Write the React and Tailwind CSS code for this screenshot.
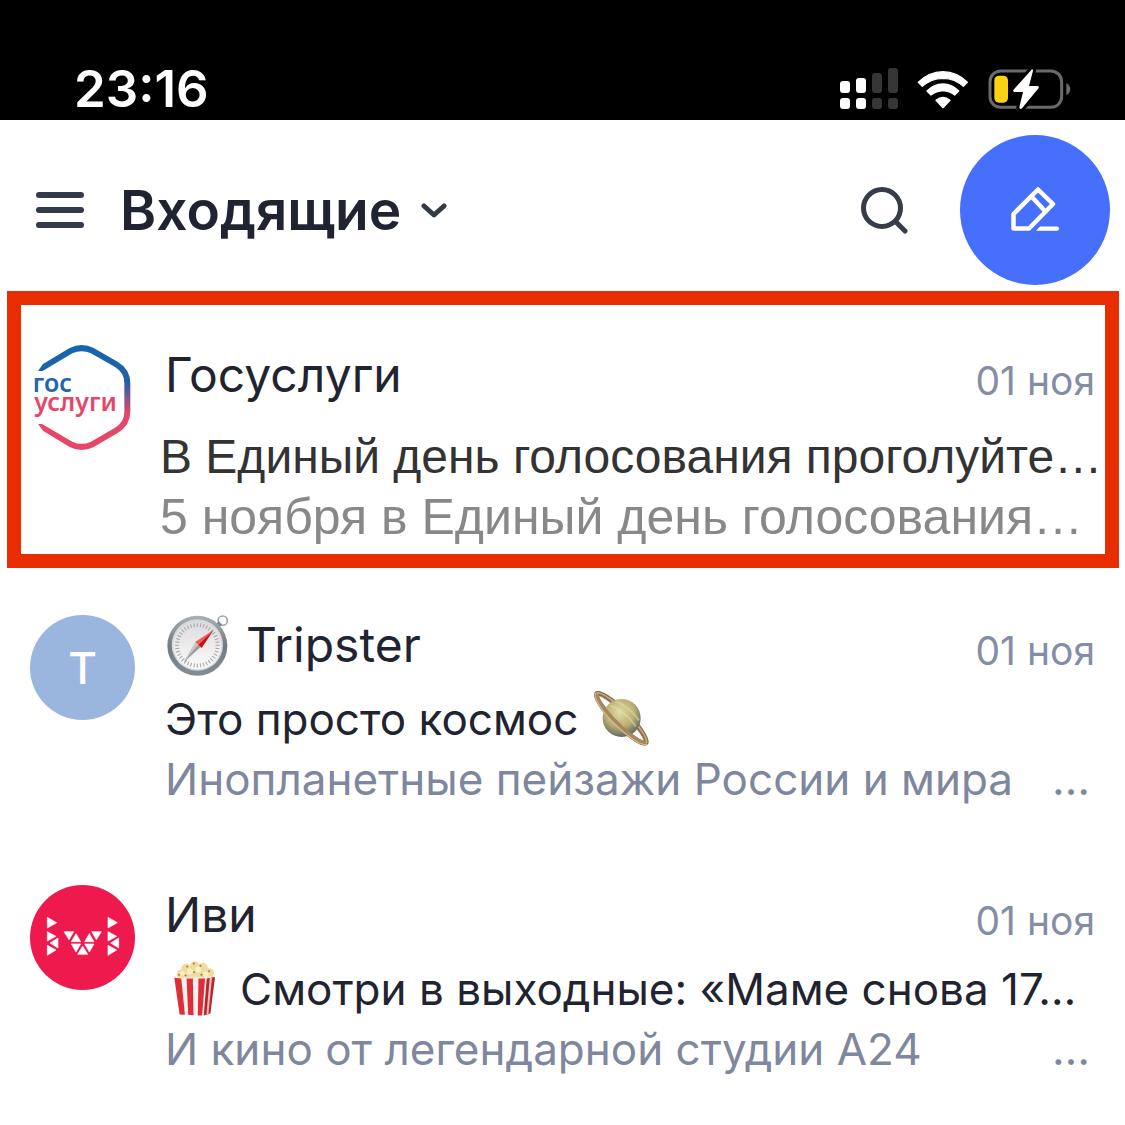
import { Fragment } from "react";

const TICKS = Array.from({ length: 40 }, (_, i) => i * 9);

function SignalIcon() {
  return (
    <svg viewBox="0 0 58 42" className="h-[42px] w-[58px]" aria-hidden="true">
      <g fill="#fff">
        <rect x="0" y="13" width="10" height="12" rx="3" />
        <rect x="16" y="10" width="10" height="15" rx="3" />
        <rect x="0" y="30" width="10" height="11" rx="3" />
        <rect x="16" y="30" width="10" height="11" rx="3" />
      </g>
      <g fill="#363636">
        <rect x="32" y="5" width="10" height="20" rx="3" />
        <rect x="48" y="0" width="10" height="25" rx="3" />
        <rect x="32" y="30" width="10" height="11" rx="3" />
        <rect x="48" y="30" width="10" height="11" rx="3" />
      </g>
    </svg>
  );
}

function WifiIcon() {
  return (
    <svg viewBox="290 56 156 117" className="h-[39px] w-[52px]" aria-hidden="true">
      <g fill="#fff" stroke="#fff" strokeWidth="4" strokeLinejoin="round">
        <path d="M294 93 Q325 62 368 61 Q411 62 441 93 L429 105 Q404 82 368 81 Q332 82 306 105 Z" />
        <path d="M320 119 Q340 99 368 98 Q396 99 415 119 L403 131 Q388 119 368 118 Q348 119 332 131 Z" />
        <path d="M347 147 Q368 130 389 147 L368 169 Z" />
      </g>
    </svg>
  );
}

function BatteryIcon() {
  return (
    <svg viewBox="500 52 249 126" className="h-[42px] w-[83px]" aria-hidden="true">
      <rect x="506" y="61" width="215" height="109" rx="32" fill="none" stroke="#6a6a6a" strokeWidth="9" />
      <path d="M735 97 Q747 104 747 115 Q747 127 735 133 Z" fill="#6a6a6a" />
      <rect x="519" y="75" width="41" height="81" rx="14" fill="#fdd116" />
      <path
        d="M632 56 L576 118 Q574 123 579 124 L605 124 L594 170 Q595 178 602 173 L652 112 Q654 106 648 106 L623 106 L635 60 Q635 55 632 56 Z"
        fill="#fff"
        stroke="#000"
        strokeWidth="18"
        strokeLinejoin="round"
        paintOrder="stroke"
      />
    </svg>
  );
}

function GosuslugiLogo() {
  return (
    <svg viewBox="90 75 315 315" className="size-[105px]" role="img" aria-label="Госуслуги">
      <defs>
        <linearGradient id="gos" gradientUnits="userSpaceOnUse" x1="0" y1="75" x2="0" y2="390">
          <stop offset="0" stopColor="#1565ad" />
          <stop offset="0.36" stopColor="#2560a8" />
          <stop offset="0.66" stopColor="#e5476a" />
          <stop offset="1" stopColor="#e84565" />
        </linearGradient>
      </defs>
      <path
        d="M114 153 L129 132 L209 84 Q245 66 281 84 L354 126 Q391 148 391 190 L391 275 Q391 315 354 338 L281 381 Q245 399 209 381 L130 333 L114 312 L126 312 L217 365 Q245 378 273 365 L345 323 Q373 306 373 276 L373 189 Q373 158 345 141 L273 100 Q245 87 217 100 L128 153 Z"
        fill="url(#gos)"
      />
      <text fontSize="75" fontWeight="600" fontFamily="'Noto Sans', sans-serif">
        <tspan x="98" y="216" fill="#2365aa">
          гос
        </tspan>
        <tspan x="103" y="274" fill="#e5476a">
          услуги
        </tspan>
      </text>
    </svg>
  );
}

function IviLogo() {
  return (
    <svg viewBox="30 45 315 315" className="size-[105px]" role="img" aria-label="Иви">
      <circle cx="187.500" cy="202.500" r="157.500" fill="#ee194d" />
      <g fill="#fff" stroke="#fff" strokeWidth="2">
        {[0, 182].map((dx) => (
          <g key={dx} transform={`translate(${dx} 0)`}>
            <path d="M82 142 L110 158 L82 174 Z" />
            <path d="M82 185 L108 199 L82 213 Z" />
            <path d="M114 204 L114 234 L90 219 Z" />
            <path d="M82 226 L108 240 L82 256 Z" />
          </g>
        ))}
        <path d="M132 185 H161 L147 209 Z" />
        <path d="M168 191 L182 215 H154 Z" />
        <path d="M154 222 H182 L168 246 Z" />
        <path d="M188 228 L203 253 H173 Z" />
        <path d="M194 222 H222 L208 246 Z" />
        <path d="M208 191 L222 215 H194 Z" />
        <path d="M215 185 H244 L229 209 Z" />
      </g>
    </svg>
  );
}

function LetterAvatar({ letter }) {
  return (
    <div className="flex size-[105px] items-center justify-center rounded-full bg-[#9ab6de] text-[44px] font-medium text-white">
      {letter}
    </div>
  );
}

function Compass() {
  return (
    <svg viewBox="50 36 195 195" className="size-[65px] shrink-0" aria-hidden="true">
      <defs>
        <linearGradient id="rim" x1="0" y1="0" x2="0" y2="1">
          <stop offset="0" stopColor="#a9b0b5" />
          <stop offset="0.5" stopColor="#727b82" />
          <stop offset="1" stopColor="#858d94" />
        </linearGradient>
        <linearGradient id="face" x1="0" y1="0" x2="0" y2="1">
          <stop offset="0" stopColor="#dcdcde" />
          <stop offset="1" stopColor="#fbfbfb" />
        </linearGradient>
      </defs>
      <circle cx="223" cy="59" r="14" fill="none" stroke="#a0a7ab" strokeWidth="5" />
      <path d="M202 70 L212 61 L221 71 L211 80 Z" fill="#7c868c" />
      <circle cx="147" cy="134" r="90" fill="url(#rim)" />
      <circle cx="147" cy="132" r="77" fill="#d5d9db" />
      <circle cx="147" cy="133" r="72" fill="url(#face)" />
      {TICKS.map((a) => (
        <path key={a} d="M147 66 V78" stroke="#a5a5a5" strokeWidth="3" transform={`rotate(${a} 147 133)`} />
      ))}
      <path d="M143 122 L157 138 L106 184 Z" fill="#9c9c9c" />
      <path d="M143 122 L150 130 L106 184 Z" fill="#c9c9c9" />
      <path d="M196 87 L141 122 L150 131 Z" fill="#f45b55" />
      <path d="M196 87 L150 131 L160 141 Z" fill="#c8121b" />
      <path d="M141 122 L160 141 L150 131 Z" fill="#d9202a" />
    </svg>
  );
}

function Saturn() {
  return (
    <svg viewBox="66 30 180 180" className="size-[60px] shrink-0" aria-hidden="true">
      <defs>
        <radialGradient id="planet" cx="0.45" cy="0.35" r="0.65">
          <stop offset="0" stopColor="#e2dca2" />
          <stop offset="0.6" stopColor="#b9ae73" />
          <stop offset="1" stopColor="#5e6a60" />
        </radialGradient>
      </defs>
      <g transform="rotate(45 154 118)">
        <ellipse cx="154" cy="118" rx="103" ry="20" fill="none" stroke="#c2a784" strokeWidth="15" />
        <ellipse cx="154" cy="118" rx="110" ry="27" fill="none" stroke="#806544" strokeWidth="3" />
        <ellipse cx="154" cy="118" rx="98" ry="16" fill="none" stroke="#896c49" strokeWidth="5" />
      </g>
      <circle cx="155" cy="117" r="57" fill="url(#planet)" />
      <path d="M120 80 Q160 92 198 142 M139 67 Q180 86 207 124" stroke="#e6dfae" strokeWidth="6" fill="none" opacity="0.5" />
      <g transform="rotate(45 154 118)" fill="none">
        <path d="M51 118 A103 20 0 0 0 257 118" stroke="#a5885c" strokeWidth="13" />
        <path d="M46 118 A108 26 0 0 0 262 118" stroke="#d8c49b" strokeWidth="3" />
      </g>
    </svg>
  );
}

function Popcorn() {
  return (
    <svg viewBox="460 270 130 180" className="h-[60px] w-[43px] shrink-0" aria-hidden="true">
      <g fill="#efdca0">
        <circle cx="486" cy="316" r="15" />
        <circle cx="500" cy="299" r="15" />
        <circle cx="526" cy="291" r="15" />
        <circle cx="550" cy="296" r="15" />
        <circle cx="569" cy="312" r="15" />
        <rect x="476" y="302" width="104" height="30" rx="10" />
      </g>
      <g fill="#f9eec5">
        <circle cx="511" cy="307" r="9" />
        <circle cx="536" cy="302" r="9" />
        <circle cx="489" cy="313" r="7" />
        <circle cx="559" cy="315" r="8" />
      </g>
      <g fill="#a9792d">
        <circle cx="503" cy="292" r="3" />
        <circle cx="523" cy="283" r="3" />
        <circle cx="543" cy="290" r="3" />
        <circle cx="524" cy="309" r="3" />
        <circle cx="498" cy="319" r="3" />
        <circle cx="546" cy="317" r="3" />
        <circle cx="569" cy="306" r="3" />
        <circle cx="478" cy="317" r="3" />
      </g>
      <path d="M464 326 L587 324 L573 434 L553 440 L480 437 Z" fill="#f8efef" />
      <g fill="#dd2f37">
        <path d="M464 326 L485 328 L496 438 L480 437 Z" />
        <path d="M501 328 L520 328 L522 439 L506 438 Z" />
        <path d="M537 328 L557 328 L548 440 L535 440 Z" />
      </g>
      <path d="M562 328 L587 324 L573 434 L553 440 Z" fill="#b5262e" />
      <path d="M571 327 L578 326 L567 436 L561 438 Z" fill="#e9bcbf" />
    </svg>
  );
}

const mails = [
  {
    id: "tripster",
    avatar: <LetterAvatar letter="T" />,
    name: (
      <Fragment>
        <Compass />
        <span className="ml-4">Tripster</span>
      </Fragment>
    ),
    date: "01 ноя",
    subject: (
      <Fragment>
        <span>Это просто космос</span>
        <span className="ml-[14px]">
          <Saturn />
        </span>
      </Fragment>
    ),
    preview: "Инопланетные пейзажи России и мира",
  },
  {
    id: "ivi",
    avatar: <IviLogo />,
    name: "Иви",
    date: "01 ноя",
    subject: (
      <Fragment>
        <span className="ml-2">
          <Popcorn />
        </span>
        <span className="ml-6">Смотри в выходные: «Маме снова 17…</span>
      </Fragment>
    ),
    preview: "И кино от легендарной студии А24",
  },
];

function MailTop({ name, date }) {
  return (
    <div className="flex h-[60px] items-center justify-between">
      <h2 className="flex items-center text-[48px] leading-[60px] text-[#1f2430]">{name}</h2>
      <time className="mt-3 text-[39px] leading-[48px] text-[#858da6]">{date}</time>
    </div>
  );
}

function MailRow({ mail }) {
  return (
    <li>
      <a href="#" className="flex items-start pt-[47px] pb-[29px] pl-[30px] whitespace-nowrap">
        <div className="shrink-0">{mail.avatar}</div>
        <div className="ml-[30px] min-w-0 flex-1">
          <div className="pr-[30px]">
            <MailTop name={mail.name} date={mail.date} />
          </div>
          <p className="mt-[14px] flex h-[60px] items-center text-[44px] leading-[60px] text-[#1f2430]">
            {mail.subject}
          </p>
          <p className="flex justify-between pr-[35px] text-[44px] leading-[60px] text-[#7f879e]">
            <span>{mail.preview}</span>
            <span>…</span>
          </p>
        </div>
      </a>
    </li>
  );
}

export default function App() {
  return (
    <div className="min-h-screen overflow-x-hidden bg-white font-['Inter','Liberation_Sans',sans-serif]">
      {/* Status bar */}
      <div className="flex h-[120px] items-end justify-between bg-black pr-[54px] pb-[10px] pl-[74px] text-white">
        <span className="text-[51px] leading-[42px] font-semibold">23:16</span>
        <div className="flex items-center gap-[19px]">
          <SignalIcon />
          <WifiIcon />
          <BatteryIcon />
        </div>
      </div>

      {/* Header */}
      <header className="flex items-center pt-[15px] pr-[15px] pb-[6px] pl-9">
        <button aria-label="Меню" className="flex w-12 flex-col gap-[9px]">
          <span className="h-[6px] rounded-sm bg-[#343a4a]" />
          <span className="h-[6px] rounded-sm bg-[#343a4a]" />
          <span className="h-[6px] rounded-sm bg-[#343a4a]" />
        </button>
        <button className="ml-9 flex items-center gap-5">
          <h1 className="text-[55px] leading-[60px] font-semibold text-[#1f2430]">Входящие</h1>
          <svg viewBox="0 0 26 15" className="h-[15px] w-[26px]" aria-hidden="true">
            <path d="M3 3 L13 12 L23 3" fill="none" stroke="#343a45" strokeWidth="5" strokeLinecap="round" strokeLinejoin="round" />
          </svg>
        </button>
        <button aria-label="Поиск" className="mr-[52px] ml-auto">
          <svg viewBox="860 185 48 48" className="size-12" fill="none" stroke="#373d47" strokeWidth="5" strokeLinecap="round">
            <circle cx="882" cy="207" r="18.500" />
            <path d="M896 221 L905 230" />
          </svg>
        </button>
        <button aria-label="Написать письмо" className="flex size-[150px] items-center justify-center rounded-full bg-[#466ffb]">
          <svg
            viewBox="1010 185 50 50"
            className="size-[50px]"
            fill="none"
            stroke="#fff"
            strokeWidth="4.500"
            strokeLinecap="round"
            strokeLinejoin="round"
          >
            <path d="M1013.500 214 V228.500 H1029 L1053 204 L1038 189.500 Z" />
            <path d="M1032 197 L1044 210" />
            <path d="M1036 230.700 L1040 226.500 H1057 Q1059 226.500 1059 228.700 Q1059 230.700 1057 230.700 Z" fill="#fff" stroke="none" />
          </svg>
        </button>
      </header>

      {/* Messages */}
      <main>
        <ul>
          <li className="mr-[6px] ml-[7px] border-[14px] border-[#e92d02]">
            <a href="#" className="flex items-start pt-[40px] pb-[7px] pl-[9px] whitespace-nowrap">
              <div className="shrink-0">
                <GosuslugiLogo />
              </div>
              <div className="ml-[25px] min-w-0 flex-1">
                <div className="pr-[10px] pl-[5px]">
                  <MailTop name="Госуслуги" date="01 ноя" />
                </div>
                <div className="font-['Liberation_Sans',sans-serif] leading-[60px]">
                  <p className="mt-[22px] text-[48px] leading-[60px] text-[#333]">В Единый день голосования проголуйте…</p>
                  <p className="text-[50px] leading-[60px] text-[#888]">5 ноября в Единый день голосования…</p>
                </div>
              </div>
            </a>
          </li>
          {mails.map((mail) => (
            <MailRow key={mail.id} mail={mail} />
          ))}
        </ul>
      </main>
    </div>
  );
}
